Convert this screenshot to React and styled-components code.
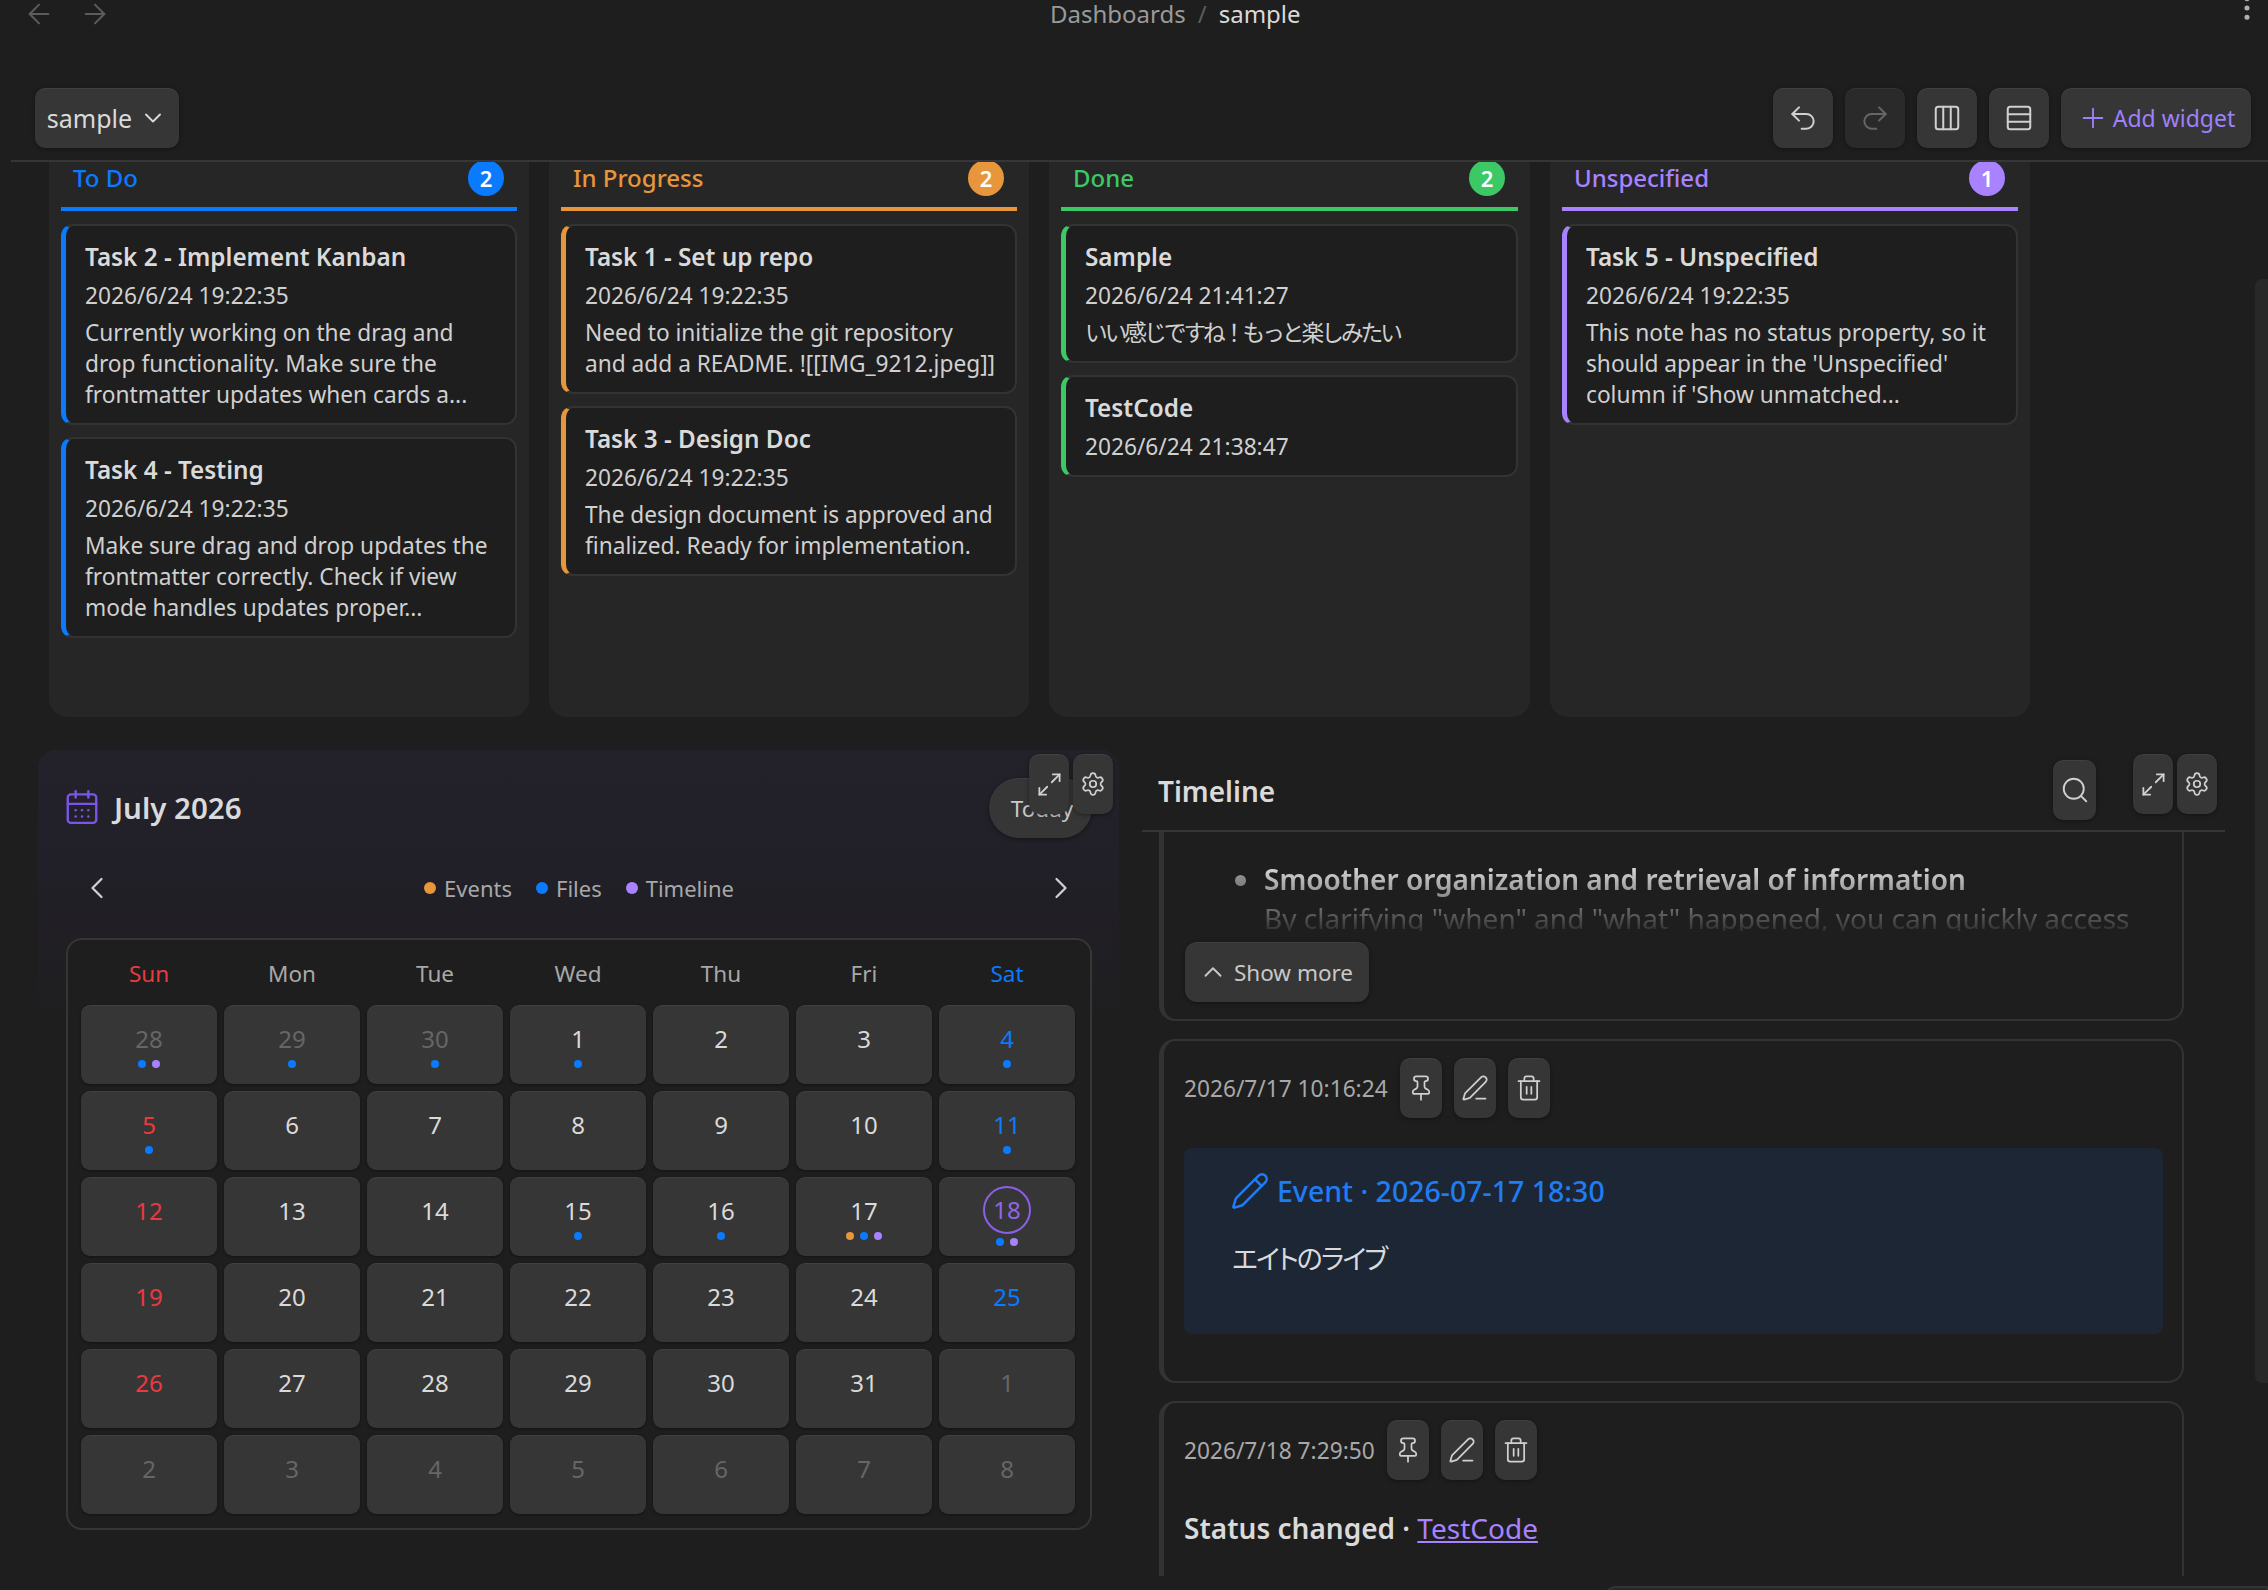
import styled, { createGlobalStyle } from "styled-components";
import {
  ArrowLeft,
  ArrowRight,
  CalendarDays,
  ChevronDown,
  ChevronLeft,
  ChevronRight,
  ChevronUp,
  Columns3,
  EllipsisVertical,
  Maximize2,
  PenLine,
  Pencil,
  Pin,
  Plus,
  Redo2,
  Rows3,
  Search,
  Settings,
  Trash2,
  Undo2,
} from "lucide-react";

const GlobalStyle = createGlobalStyle`
  html, body {
    margin: 0;
    background: #1e1e1e;
  }
  * {
    box-sizing: border-box;
  }
  body {
    font-family: "Noto Sans", "Noto Sans CJK JP", sans-serif;
    color: #dadada;
  }
`;

const BLUE = "#0a7aff";
const ORANGE = "#e8963c";
const GREEN = "#3cc864";
const PURPLE = "#a882ff";
const RED = "#e93a40";

const Page = styled.div`
  position: relative;
  width: 2268px;
  height: 1590px;
  overflow: hidden;
  background: #1e1e1e;
`;

const TopBar = styled.div`
  height: 28px;
  display: flex;
  align-items: center;
  justify-content: space-between;
  padding: 0 5px 0 23px;
`;

const NavArrows = styled.div`
  display: flex;
  gap: 24px;
  color: #5c5c5c;
`;

const Crumbs = styled.div`
  position: absolute;
  top: 0;
  left: 1050px;
  display: flex;
  gap: 12px;
  font-size: 24px;
  line-height: 28px;
  color: #9a9a9a;
`;

const CrumbCurrent = styled.span`
  color: #dadada;
`;

const CrumbSlash = styled.span`
  color: #5c5c5c;
`;

const MoreButton = styled.div`
  color: #b0b0b0;
  margin-top: -8px;
`;

const Toolbar = styled.div`
  height: 134px;
  margin-left: 11px;
  padding: 60px 17px 0 24px;
  border-bottom: 2px solid #363636;
  display: flex;
  justify-content: space-between;
  align-items: flex-start;
`;

const ToolGroup = styled.div`
  display: flex;
  gap: 12px;
`;

const Raised = styled.button`
  display: flex;
  align-items: center;
  justify-content: center;
  height: 60px;
  padding: 0;
  border: none;
  border-radius: 10px;
  font-family: inherit;
  background: #363636;
  color: #d0d0d0;
  box-shadow: 0 1px 4px rgba(0, 0, 0, 0.4), inset 0 1px 0 rgba(255, 255, 255, 0.05);
`;

const SelectButton = styled(Raised)`
  width: 144px;
  gap: 7px;
  font-size: 25px;
  color: #dadada;
`;

const ToolButton = styled(Raised)`
  width: 60px;
  background: ${(p) => (p.$off ? "#2a2a2a" : "#363636")};
  color: ${(p) => (p.$off ? "#666666" : "#d0d0d0")};
`;

const AddButton = styled(Raised)`
  width: 190px;
  gap: 4px;
  font-size: 23px;
  color: #9d80fb;
`;

const Scroller = styled.div`
  height: 1428px;
  overflow: hidden;
`;

const Board = styled.div`
  display: grid;
  grid-template-columns: 480px 480px 481px 480px;
  gap: 20px;
  margin: -2px 0 0 49px;
  height: 557px;
`;

const Column = styled.section`
  background: #262626;
  border-radius: 0 0 18px 18px;
  padding: 0 12px;
`;

const ColumnHead = styled.header`
  height: 51px;
  display: flex;
  justify-content: space-between;
  padding: 0 13px 0 12px;
  border-bottom: 4px solid ${(p) => p.$color};
  margin-bottom: 13px;
  color: ${(p) => p.$color};
  font-size: 24px;
  font-weight: 500;
  line-height: 36px;
`;

const Count = styled.span`
  width: 36px;
  height: 36px;
  border-radius: 50%;
  background: ${(p) => p.$color};
  color: #ffffff;
  font-size: 22px;
  font-weight: 600;
  line-height: 36px;
  text-align: center;
`;

const CardStack = styled.div`
  display: flex;
  flex-direction: column;
  gap: 12px;
`;

const TaskCard = styled.article`
  background: #1e1e1e;
  border: 2px solid #333333;
  border-left: 5px solid ${(p) => p.$color};
  border-radius: 12px;
  padding: 16px 6px 13px 19px;
  font-size: 22.7px;
  line-height: 31px;
`;

const TaskTitle = styled.div`
  font-size: 24.3px;
  font-weight: 600;
  line-height: 29px;
  color: #dadada;
`;

const TaskDate = styled.div`
  margin-top: 9px;
  color: #d0d0d0;
`;

const TaskText = styled.div`
  margin-top: 6px;
  color: #d0d0d0;
  white-space: pre-line;
  letter-spacing: ${(p) => (p.$cjk ? "-3px" : "normal")};
`;

const LowerRow = styled.div`
  display: flex;
  margin: 33px 0 0 38px;
  gap: 23px;
`;

const CalendarWidget = styled.section`
  position: relative;
  width: 1081px;
  padding: 28px 27px 0 28px;
  border-radius: 18px;
  background: linear-gradient(#23222a 0, #211f27 130px, #1e1e1e 290px);
`;

const CalendarHead = styled.header`
  height: 60px;
  display: flex;
  align-items: center;
  justify-content: space-between;
`;

const MonthTitle = styled.h2`
  display: flex;
  align-items: center;
  gap: 13px;
  margin: -2px 0 0;
  font-size: 29.5px;
  font-weight: 600;
  color: #dadada;
`;

const CalendarIcon = styled(CalendarDays)`
  color: #7c55e8;
  margin-left: -3px;
`;

const TodayButton = styled(Raised)`
  width: 103px;
  border-radius: 30px;
  padding-left: 3px;
  font-size: 22.5px;
  color: #c8c8c8;
`;

const NavRow = styled.div`
  height: 50px;
  margin-top: 25px;
  padding: 0 13px;
  display: flex;
  align-items: center;
  justify-content: space-between;
  color: #d0d0d0;
`;

const Legend = styled.div`
  display: flex;
  gap: 24px;
  font-size: 22px;
  color: #a8a8a8;
`;

const LegendItem = styled.span`
  display: flex;
  align-items: center;
  gap: 8px;
`;

const LegendDot = styled.i`
  width: 12px;
  height: 12px;
  border-radius: 50%;
  background: ${(p) => p.$color};
`;

const MonthFrame = styled.div`
  height: 592px;
  margin-top: 25px;
  padding: 0 15px 14px 13px;
  border: 2px solid #363636;
  border-radius: 16px;
  background: #1e1e1e;
`;

const WeekRow = styled.div`
  height: 65px;
  padding-top: 1px;
  display: grid;
  grid-template-columns: repeat(7, 136px);
  gap: 7px;
  align-items: center;
  text-align: center;
  font-size: 22.5px;
`;

const WeekName = styled.span`
  color: ${(p) => p.$color || "#a8a8a8"};
`;

const DayGrid = styled.div`
  display: grid;
  grid-template-columns: repeat(7, 136px);
  grid-auto-rows: 79px;
  gap: 7px;
`;

const DayCell = styled.div`
  display: flex;
  flex-direction: column;
  align-items: center;
  padding-top: ${(p) => (p.$today ? "9px" : "16px")};
  gap: ${(p) => (p.$today ? "4px" : "3px")};
  border-radius: 9px;
  background: #363636;
  box-shadow: 0 1px 3px rgba(0, 0, 0, 0.4), inset 0 1px 0 rgba(255, 255, 255, 0.05);
`;

const DayNumber = styled.span`
  display: block;
  text-align: center;
  font-size: 24px;
  width: ${(p) => (p.$today ? "48px" : "auto")};
  height: ${(p) => (p.$today ? "48px" : "36px")};
  line-height: ${(p) => (p.$today ? "44px" : "36px")};
  border: ${(p) => (p.$today ? "2px solid #8b5fe8" : "none")};
  border-radius: 50%;
  color: ${(p) => p.$color};
`;

const DotRow = styled.div`
  display: flex;
  gap: 6px;
`;

const EventDot = styled.i`
  width: 8px;
  height: 8px;
  border-radius: 50%;
  background: ${(p) => p.$color};
`;

const WidgetActions = styled.div`
  position: absolute;
  top: 4px;
  right: ${(p) => p.$right};
  display: flex;
  gap: 4px;
`;

const WidgetButton = styled(Raised)`
  width: 40px;
`;

const TimelineWidget = styled.section`
  position: relative;
  width: 1083px;
  padding-top: 10px;
`;

const TimelineHead = styled.header`
  height: 72px;
  padding: 0 129px 10px 16px;
  border-bottom: 2px solid #363636;
  display: flex;
  align-items: center;
  justify-content: space-between;
`;

const TimelineTitle = styled.h2`
  margin: 1px 0 0;
  font-size: 28px;
  font-weight: 600;
  color: #dadada;
`;

const SearchButton = styled(Raised)`
  width: 43px;
`;

const EntryList = styled.div`
  height: 744px;
  overflow: hidden;
  padding-left: 17px;
  display: flex;
  flex-direction: column;
  gap: 18px;
`;

const Entry = styled.article`
  flex: none;
  width: 1025px;
  border: 2px solid #333333;
  border-left-width: 5px;
  border-radius: 16px;
  padding: 17px 20px 0 20px;
`;

const CutEntry = styled(Entry)`
  margin-top: -20px;
  padding: 0 20px 17px 21px;
`;

const Faded = styled.div`
  height: 117px;
  padding: 46px 0 0 50px;
  overflow: hidden;
  display: flex;
  gap: 18px;
  font-size: 28px;
  line-height: 39px;
  color: #dadada;
  mask-image: linear-gradient(#000 53px, transparent 124px);
`;

const Bullet = styled.i`
  flex: none;
  width: 11px;
  height: 11px;
  margin-top: 15px;
  border-radius: 50%;
  background: #a0a0a0;
`;

const Strong = styled.strong`
  font-weight: 600;
  display: block;
`;

const ShowMore = styled(Raised)`
  width: 184px;
  margin-top: 11px;
  padding-right: 3px;
  gap: 6px;
  border-radius: 12px;
  font-size: 22.5px;
  color: #c8c8c8;
`;

const EntryMeta = styled.div`
  display: flex;
  align-items: center;
  gap: 12px;
  font-size: 22.7px;
  color: #a8a8a8;
`;

const EntryButton = styled(Raised)`
  width: 42px;
`;

const EventBlock = styled.div`
  height: 186px;
  margin: 30px 0 47px;
  width: 979px;
  padding: 24px 0 0 46px;
  border-radius: 8px;
  background: #1d2635;
`;

const EventLine = styled.div`
  display: flex;
  align-items: center;
  gap: 7px;
  height: 38px;
  font-size: 28.5px;
  font-weight: 500;
  color: #1f7cf5;
`;

const EventNote = styled.p`
  margin: 31px 0 0 2px;
  font-size: 27px;
  line-height: 36px;
  letter-spacing: -1.9px;
  color: #dadada;
  font-feature-settings: "palt";
`;

const StatusLine = styled.p`
  margin: 28px 0 60px;
  font-size: 28px;
  font-weight: 600;
  line-height: 40px;
  color: #dadada;
`;

const NoteLink = styled.a`
  font-weight: 400;
  color: ${PURPLE};
  text-decoration: underline;
`;

const ScrollThumb = styled.div`
  position: absolute;
  top: 279px;
  right: 0;
  width: 13px;
  height: 1104px;
  border-radius: 7px 0 0 7px;
  background: #282828;
`;

const StatusBar = styled.div`
  position: absolute;
  left: 1604px;
  right: 0;
  bottom: -8px;
  height: 12px;
  border: 2px solid #333333;
  border-radius: 12px 0 0 0;
  background: #262626;
`;

const columns = [
  {
    name: "To Do",
    color: BLUE,
    cards: [
      {
        title: "Task 2 - Implement Kanban",
        date: "2026/6/24 19:22:35",
        text: "Currently working on the drag and\ndrop functionality. Make sure the\nfrontmatter updates when cards a...",
      },
      {
        title: "Task 4 - Testing",
        date: "2026/6/24 19:22:35",
        text: "Make sure drag and drop updates the\nfrontmatter correctly. Check if view\nmode handles updates proper...",
      },
    ],
  },
  {
    name: "In Progress",
    color: ORANGE,
    cards: [
      {
        title: "Task 1 - Set up repo",
        date: "2026/6/24 19:22:35",
        text: "Need to initialize the git repository\nand add a README. ![[IMG_9212.jpeg]]",
      },
      {
        title: "Task 3 - Design Doc",
        date: "2026/6/24 19:22:35",
        text: "The design document is approved and\nfinalized. Ready for implementation.",
      },
    ],
  },
  {
    name: "Done",
    color: GREEN,
    cards: [
      {
        title: "Sample",
        date: "2026/6/24 21:41:27",
        text: "いい感じですね！もっと楽しみたい",
        cjk: true,
      },
      { title: "TestCode", date: "2026/6/24 21:38:47" },
    ],
  },
  {
    name: "Unspecified",
    color: PURPLE,
    cards: [
      {
        title: "Task 5 - Unspecified",
        date: "2026/6/24 19:22:35",
        text: "This note has no status property, so it\nshould appear in the 'Unspecified'\ncolumn if 'Show unmatched...",
      },
    ],
  },
];

const weekNames = ["Sun", "Mon", "Tue", "Wed", "Thu", "Fri", "Sat"];

const prev = [28, 29, 30];
const dayDots = {
  "p28": [BLUE, PURPLE],
  "p29": [BLUE],
  "p30": [BLUE],
  1: [BLUE],
  4: [BLUE],
  5: [BLUE],
  11: [BLUE],
  15: [BLUE],
  16: [BLUE],
  17: [ORANGE, BLUE, PURPLE],
  18: [BLUE, PURPLE],
};

const calendarDays = [
  ...prev.map((n) => ({ n, key: `p${n}`, muted: true })),
  ...Array.from({ length: 31 }, (_, i) => ({ n: i + 1, key: i + 1 })),
  ...Array.from({ length: 8 }, (_, i) => ({ n: i + 1, key: `n${i + 1}`, muted: true })),
];

function dayColor(day, index) {
  if (day.muted) return "#666666";
  if (day.n === 18) return "#8f66e8";
  if (index % 7 === 0) return RED;
  if (index % 7 === 6) return BLUE;
  return "#dadada";
}

function WidgetTools({ right }) {
  return (
    <WidgetActions $right={right}>
      <WidgetButton>
        <Maximize2 size={27} strokeWidth={1.6} />
      </WidgetButton>
      <WidgetButton>
        <Settings size={26} strokeWidth={1.6} />
      </WidgetButton>
    </WidgetActions>
  );
}

function EntryHeader({ date }) {
  return (
    <EntryMeta>
      <span>{date}</span>
      <EntryButton>
        <Pin size={28} strokeWidth={1.5} />
      </EntryButton>
      <EntryButton>
        <PenLine size={28} strokeWidth={1.5} />
      </EntryButton>
      <EntryButton>
        <Trash2 size={28} strokeWidth={1.5} />
      </EntryButton>
    </EntryMeta>
  );
}

function App() {
  return (
    <>
      <GlobalStyle />
      <Page>
        <TopBar>
          <NavArrows>
            <ArrowLeft size={32} strokeWidth={1.5} />
            <ArrowRight size={32} strokeWidth={1.5} />
          </NavArrows>
          <Crumbs>
            <span>Dashboards</span>
            <CrumbSlash>/</CrumbSlash>
            <CrumbCurrent>sample</CrumbCurrent>
          </Crumbs>
          <MoreButton>
            <EllipsisVertical size={32} strokeWidth={1.8} />
          </MoreButton>
        </TopBar>

        <Toolbar>
          <SelectButton>
            sample
            <ChevronDown size={28} strokeWidth={1.6} />
          </SelectButton>
          <ToolGroup>
            <ToolButton>
              <Undo2 size={32} strokeWidth={1.5} />
            </ToolButton>
            <ToolButton $off>
              <Redo2 size={32} strokeWidth={1.5} />
            </ToolButton>
            <ToolButton>
              <Columns3 size={30} strokeWidth={1.6} />
            </ToolButton>
            <ToolButton>
              <Rows3 size={30} strokeWidth={1.6} />
            </ToolButton>
            <AddButton>
              <Plus size={32} strokeWidth={1.4} />
              Add widget
            </AddButton>
          </ToolGroup>
        </Toolbar>

        <Scroller>
          <Board>
            {columns.map((col) => (
              <Column key={col.name}>
                <ColumnHead $color={col.color}>
                  {col.name}
                  <Count $color={col.color}>{col.cards.length}</Count>
                </ColumnHead>
                <CardStack>
                  {col.cards.map((card) => (
                    <TaskCard key={card.title} $color={col.color}>
                      <TaskTitle>{card.title}</TaskTitle>
                      <TaskDate>{card.date}</TaskDate>
                      {card.text && <TaskText $cjk={card.cjk}>{card.text}</TaskText>}
                    </TaskCard>
                  ))}
                </CardStack>
              </Column>
            ))}
          </Board>

          <LowerRow>
            <CalendarWidget>
              <CalendarHead>
                <MonthTitle>
                  <CalendarIcon size={38} strokeWidth={1.5} />
                  July 2026
                </MonthTitle>
                <TodayButton>Today</TodayButton>
              </CalendarHead>
              <NavRow>
                <ChevronLeft size={36} strokeWidth={1.5} />
                <Legend>
                  <LegendItem>
                    <LegendDot $color={ORANGE} />
                    Events
                  </LegendItem>
                  <LegendItem>
                    <LegendDot $color={BLUE} />
                    Files
                  </LegendItem>
                  <LegendItem>
                    <LegendDot $color={PURPLE} />
                    Timeline
                  </LegendItem>
                </Legend>
                <ChevronRight size={36} strokeWidth={1.5} />
              </NavRow>
              <MonthFrame>
                <WeekRow>
                  {weekNames.map((name, i) => (
                    <WeekName key={name} $color={i === 0 ? RED : i === 6 ? BLUE : undefined}>
                      {name}
                    </WeekName>
                  ))}
                </WeekRow>
                <DayGrid>
                  {calendarDays.map((day, i) => {
                    const isToday = !day.muted && day.n === 18;
                    const dots = dayDots[day.key];
                    return (
                      <DayCell key={day.key} $today={isToday}>
                        <DayNumber $today={isToday} $color={dayColor(day, i)}>
                          {day.n}
                        </DayNumber>
                        {dots && (
                          <DotRow>
                            {dots.map((c) => (
                              <EventDot key={c} $color={c} />
                            ))}
                          </DotRow>
                        )}
                      </DayCell>
                    );
                  })}
                </DayGrid>
              </MonthFrame>
              <WidgetTools right="6px" />
            </CalendarWidget>

            <TimelineWidget>
              <TimelineHead>
                <TimelineTitle>Timeline</TimelineTitle>
                <SearchButton>
                  <Search size={30} strokeWidth={1.5} />
                </SearchButton>
              </TimelineHead>
              <EntryList>
                <CutEntry>
                  <Faded>
                    <Bullet />
                    <div>
                      <Strong>Smoother organization and retrieval of information</Strong>
                      By clarifying "when" and "what" happened, you can quickly access
                    </div>
                  </Faded>
                  <ShowMore>
                    <ChevronUp size={30} strokeWidth={1.5} />
                    Show more
                  </ShowMore>
                </CutEntry>
                <Entry>
                  <EntryHeader date="2026/7/17 10:16:24" />
                  <EventBlock>
                    <EventLine>
                      <Pencil size={40} strokeWidth={1.5} />
                      Event · 2026-07-17 18:30
                    </EventLine>
                    <EventNote>エイトのライブ</EventNote>
                  </EventBlock>
                </Entry>
                <Entry>
                  <EntryHeader date="2026/7/18 7:29:50" />
                  <StatusLine>
                    Status changed · <NoteLink>TestCode</NoteLink>
                  </StatusLine>
                </Entry>
              </EntryList>
              <WidgetTools right="8px" />
            </TimelineWidget>
          </LowerRow>
        </Scroller>

        <ScrollThumb />
        <StatusBar />
      </Page>
    </>
  );
}

export default App;
